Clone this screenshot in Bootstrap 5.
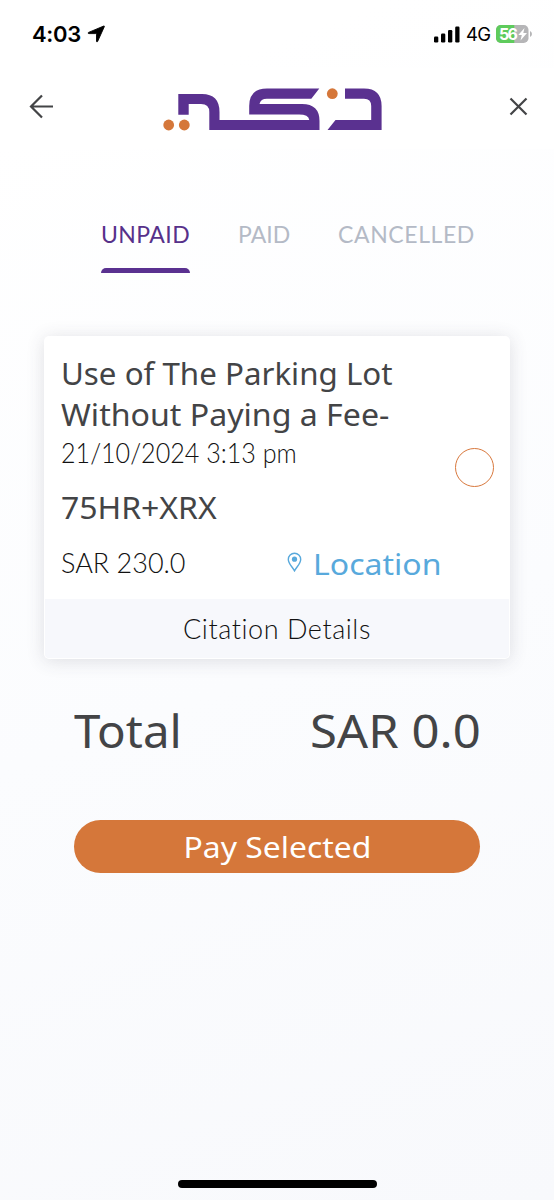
<!DOCTYPE html>
<html lang="en">
<head>
<meta charset="utf-8">
<meta name="viewport" content="width=device-width, initial-scale=1">
<title>Citations</title>
<link href="https://cdn.jsdelivr.net/npm/bootstrap@5.3.0/dist/css/bootstrap.min.css" rel="stylesheet">
<style>
body{font-family:"Noto Sans","Liberation Sans",sans-serif;color:#434446;background:linear-gradient(160deg,#fff 10%,#fbfcfe 55%,#f8f9fc 100%);height:1200px;overflow:hidden;white-space:nowrap}
svg{display:block;flex:none}
.status-bar{height:68px;padding:0 21px 0 32px;font-family:Inter,sans-serif;color:#000}
.clock{font-size:22px;font-weight:600;line-height:68px;width:55px;letter-spacing:-.3px}
.network{font-size:18.5px;line-height:69px;width:30px;margin-left:6px;letter-spacing:-.7px}
.app-bar{height:81px;padding:0 26px 0 29px}
.tabs-row{padding:66px 0 0 101px;height:187px}
.tab-link{display:block;font-family:Lato,sans-serif;font-size:23px;line-height:38px;height:58px;color:#b4bac6;text-decoration:none}
.tab-link.current{color:#57318a;width:137px;letter-spacing:.4px}
.tab-link.current::after{content:"";display:block;width:89px;height:5.5px;margin:14.5px 0 0 -.5px;border-radius:6px 6px 0 0;background:#5a3190}
.ticket{width:466px;height:323.5px;margin:-.5px 0 0 44px;border-radius:5px;background:#fff;box-shadow:0 2px 18px rgba(60,65,80,.16)}
.ticket-body{height:263px;padding:17.5px 16.500px 0 17px}
.wide{display:inline-block;transform:scaleX(var(--stretch));transform-origin:left}
.title-text{font-size:30px;line-height:41.4px;height:82px}
.thin-text{font-family:Lato,sans-serif;font-size:27px;line-height:36px;font-weight:300;color:#111}
.plate{font-size:30px;line-height:41px;margin-top:15.500px}
.fee-row{margin-top:15px}
.fee{width:226px;line-height:40px}
.ticket-foot{height:59.5px;margin:0 1px 1px;background:#f7f8fc;border-radius:0 0 4px 4px;line-height:59px;letter-spacing:.55px}
.pick{width:39px;height:39px;margin:95px 0 0;border:1.6px solid #d8783d;border-radius:50%;background:#fff;appearance:none}
.place{color:#58a9dc;font-size:29.5px;line-height:41px;text-decoration:none}
.place svg{margin:9.500px 10.500px 0 0}
.total-row{padding:0 73px 0 74px;margin-top:41px;font-size:45px;line-height:61px;height:60px}
.amount{transform-origin:right}
.pay-btn{width:406px;height:53px;margin:60px 0 0 74px;border:0;border-radius:27px;background:#d5773a;color:#fff;font-size:29px;line-height:54px;padding:0}
.pay-btn .wide{transform-origin:center}
.home-bar{width:199px;height:8px;border-radius:4px;background:#000;margin:auto auto 12px}
</style>
</head>
<body class="d-flex flex-column">
<div class="status-bar d-flex align-items-center">
  <span class="clock">4:03</span>
  <svg width="18" height="18" viewBox="-.5 -.5 18 18"><path d="M16.3.5C16.8.3 17 .7 16.8 1.2L10.2 15.8C9.8 16.7 9 16.500 9 15.700V8.800Q9 8.100 8.300 8.100H1.400C.5 8.100.3 7.200 1.100 6.900Z" stroke="#000" stroke-width=".9" stroke-linejoin="round"/></svg>
  <svg class="ms-auto" width="26" height="17" viewBox="0 0 26 17"><rect y="10.500" width="4.300" height="6" rx="1.200"/><rect x="7" y="7.500" width="4.300" height="9" rx="1.200"/><rect x="14" y="4" width="4.300" height="12.500" rx="1.200"/><rect x="21.200" y=".5" width="4.300" height="16" rx="1.200"/></svg>
  <span class="network">4G</span>
  <svg width="37" height="18" viewBox="0 0 37 18"><defs><clipPath id="cell"><rect width="32.500" height="18" rx="4.800"/></clipPath></defs><g clip-path="url(#cell)"><path fill="#b5b5b7" d="M0 0h33v18H0z"/><path fill="#5ecb5c" d="M0 0h18.300v18H0z"/></g><path fill="#b5b5b7" d="M34 6q2 1 2 3t-2 3z"/><text x="3" y="14.700" font-size="16" font-weight="700" fill="#fff" textLength="19">56</text><path fill="#fff" d="M28.500 3 22.300 10H25.800L24.500 15.500 31 8H27.300Z"/></svg>
</div>
<header class="app-bar d-flex align-items-start bg-white">
  <svg width="25" height="25" viewBox="0 0 25 25" style="margin-top:26px"><path d="M24 12.500H2M13 1.500 2 12.500 13 23.500" fill="none" stroke="#434446" stroke-width="2.200"/></svg>
  <svg width="220" height="44" viewBox="163 87 220 44" style="margin:19px 0 0 109px"><g fill="#5a3190"><path d="M319.300 88.400H267Q249.200 88.400 249.200 106V114.600H299Q308.500 114.600 309.300 120H219.500V112Q219.500 94 202 94H178.300V114.800H188.700V104H201Q209.300 104 209.300 112V130H319.500V121Q319.500 104 302 104H259.500Q260.500 98.700 267 98.700H311.300Z"/><path d="M345 88.400H364Q381.600 88.400 381.600 106V130H327.500L335.500 120H371.200V106Q371.200 98.700 364 98.700H345Z"/></g><g fill="#d5773a"><circle cx="332.300" cy="93.700" r="5.400"/><circle cx="168.700" cy="125" r="5.400"/><circle cx="184.300" cy="125" r="5.400"/></g></svg>
  <svg class="ms-auto" width="19" height="19" viewBox="0 0 19 19" style="margin-top:29px"><path d="m1.500 1.500 16 16m0-16-16 16" fill="none" stroke="#434446" stroke-width="2.200"/></svg>
</header>
<nav class="tabs-row d-flex align-items-start">
  <a href="#" class="tab-link current">UNPAID</a>
  <a href="#" class="tab-link" style="width:100px">PAID</a>
  <a href="#" class="tab-link" style="letter-spacing:.6px">CANCELLED</a>
</nav>
<section class="ticket">
  <div class="ticket-body d-flex align-items-start">
    <div class="flex-grow-1">
      <div class="title-text"><span class="wide" style="--stretch:1.043">Use of The Parking Lot</span><br><span class="wide" style="--stretch:1.07">Without Paying a Fee-</span></div>
      <div class="thin-text"><span class="wide" style="--stretch:.93">21/10/2024 3:13 pm</span></div>
      <div class="plate"><span class="wide" style="--stretch:1.065">75HR+XRX</span></div>
      <div class="fee-row d-flex">
        <span class="thin-text fee">SAR 230.0</span>
        <a class="place d-flex" href="#"><svg width="15" height="20" viewBox="0 0 15 20"><path d="M7.500 18.800C5.500 15 1.300 11.500 1.300 7.400a6.200 6.200 0 0 1 12.400 0C13.700 11.500 9.500 15 7.500 18.800Z" fill="none" stroke="currentColor" stroke-width="1.400"/><circle cx="7.500" cy="7.200" r="2.600" fill="currentColor"/></svg><span class="wide" style="--stretch:1.085">Location</span></a>
      </div>
    </div>
    <input class="pick" type="radio" aria-label="Select citation">
  </div>
  <div class="ticket-foot thin-text text-center">Citation Details</div>
</section>
<div class="total-row d-flex justify-content-between"><span class="wide" style="--stretch:1.055">Total</span><span class="wide amount" style="--stretch:1.09">SAR 0.0</span></div>
<button class="pay-btn"><span class="wide" style="--stretch:1.1">Pay Selected</span></button>
<div class="home-bar"></div>
<script src="https://cdn.jsdelivr.net/npm/bootstrap@5.3.0/dist/js/bootstrap.bundle.min.js"></script>
</body>
</html>
